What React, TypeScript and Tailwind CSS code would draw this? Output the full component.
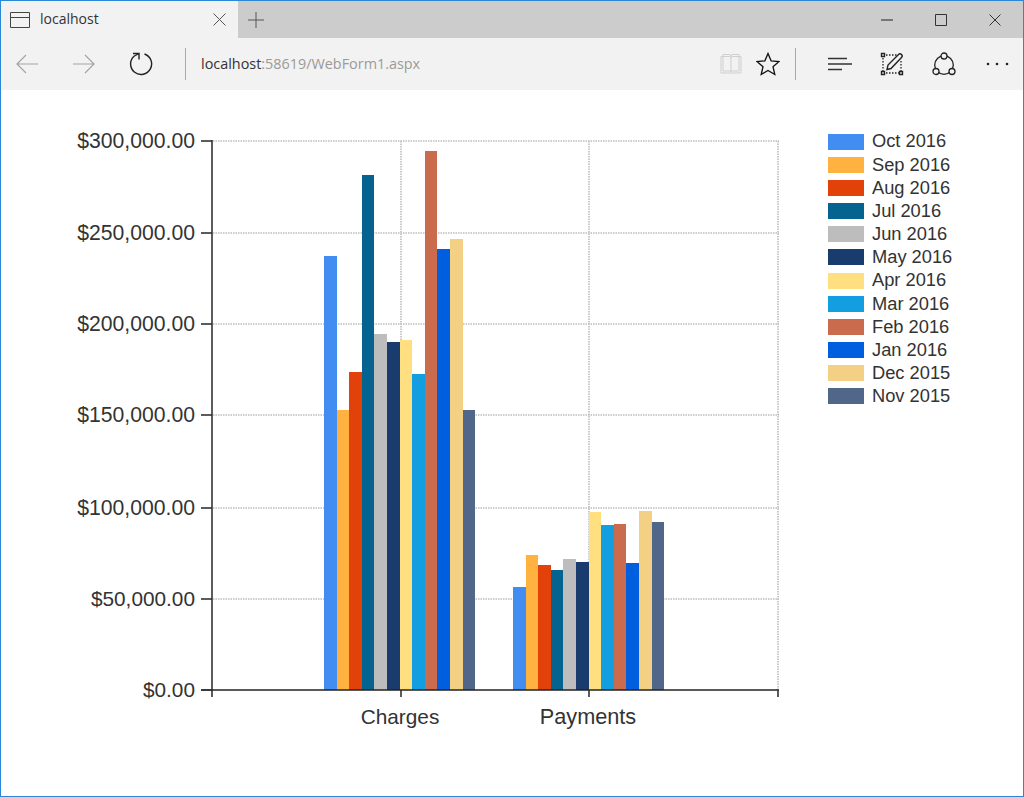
const colors = ['#428DF2', '#FFB23F', '#E2420A', '#05648F', '#BDBDBD', '#1A3B6E', '#FFDF80', '#129EE0', '#C96B4C', '#005FDE', '#F3D083', '#51678A'];
const months = ['Oct 2016', 'Sep 2016', 'Aug 2016', 'Jul 2016', 'Jun 2016', 'May 2016', 'Apr 2016', 'Mar 2016', 'Feb 2016', 'Jan 2016', 'Dec 2015', 'Nov 2015'];
const edgesA = [324, 337, 349, 362, 374, 387, 400, 412, 425, 437, 450, 463, 475];
const edgesB = [513, 526, 538, 551, 563, 576, 589, 601, 614, 626, 639, 652, 664];
const topsA = [256, 410, 372, 175, 334, 342, 340, 374, 151, 249, 239, 410];
const topsB = [587, 555, 565, 570, 559, 562, 512, 525, 524, 563, 511, 522];
const ticks = [
  { y: 141, label: '$300,000.00', size: 21.2 },
  { y: 233, label: '$250,000.00', size: 21.2 },
  { y: 324, label: '$200,000.00', size: 21.2 },
  { y: 415, label: '$150,000.00', size: 21.2 },
  { y: 508, label: '$100,000.00', size: 21.2 },
  { y: 599, label: '$50,000.00', size: 20.8 },
  { y: 690, label: '$0.00', size: 20.8 },
];

function Chart() {
  return (
    <svg width="820" height="706" viewBox="1 90 820 706" className="block shrink-0">
      {ticks.slice(0, 6).map((t) => (
        <line key={t.y} x1="213" x2="779" y1={t.y} y2={t.y} stroke="#bdbdbd" strokeWidth="1.6" strokeDasharray="1.5 1" />
      ))}
      {[401, 589, 778].map((x) => (
        <line key={x} x1={x} x2={x} y1="141" y2="690" stroke="#bdbdbd" strokeWidth="1.6" strokeDasharray="1.5 1" />
      ))}
      {[edgesA, edgesB].map((edges, g) =>
        colors.map((c, i) => {
          const top = (g === 0 ? topsA : topsB)[i];
          return <rect key={g + c} x={edges[i]} y={top} width={edges[i + 1] - edges[i]} height={690 - top} fill={c} />;
        }),
      )}
      <line x1="212" x2="212" y1="140" y2="697" stroke="#333" strokeWidth="1.6" />
      <line x1="201" x2="779" y1="690" y2="690" stroke="#222" strokeWidth="1.6" />
      {ticks.map((t) => (
        <line key={t.y} x1="201" x2="212" y1={t.y} y2={t.y} stroke="#333" strokeWidth="1.6" />
      ))}
      {[401, 589, 778].map((x) => (
        <line key={x} x1={x} x2={x} y1="690" y2="697" stroke="#333" strokeWidth="1.6" />
      ))}
      {ticks.map((t) => (
        <text key={t.label} x="195" y={t.y + 7} textAnchor="end" fontFamily="'Liberation Sans', Arial, sans-serif" fontSize={t.size} fill="#333">
          {t.label}
        </text>
      ))}
      <text x="400" y="724" textAnchor="middle" fontFamily="'Liberation Sans', Arial, sans-serif" fontSize="20.8" fill="#333">Charges</text>
      <text x="588" y="724" textAnchor="middle" fontFamily="'Liberation Sans', Arial, sans-serif" fontSize="21.7" fill="#333">Payments</text>
    </svg>
  );
}

const Icon = ({ children, w = 24, h = 24 }: { children: React.ReactNode; w?: number; h?: number }) => (
  <svg width={w} height={h} viewBox={`0 0 ${w} ${h}`} fill="none" className="block shrink-0">
    {children}
  </svg>
);

export default function App() {
  return (
    <div className="w-[1024px] h-[797px] border border-[#2b87d8] bg-white flex flex-col overflow-hidden font-['Open_Sans',sans-serif]">
      <div className="h-[37px] shrink-0 flex bg-[#cccccc]">
        <div className="w-[237px] bg-[#f2f2f2] flex items-center pl-[9px]">
          <Icon w={20} h={16}>
            <path d="M.5.5h19v15H.5zM.5 5.5h19" stroke="#444" />
          </Icon>
          <span className="ml-[10px] mb-[1px] text-[14px] text-[#333] leading-none">localhost</span>
          <span className="ml-auto mr-[12px]">
            <Icon w={13} h={13}>
              <path d="M.5.5l12 12M12.5.5l-12 12" stroke="#555" />
            </Icon>
          </span>
        </div>
        <span className="ml-[10px] self-center">
          <Icon w={16} h={16}>
            <path d="M8 0v16M0 8h16" stroke="#555" />
          </Icon>
        </span>
        <div className="ml-auto flex items-center">
          <span className="mr-[42px]"><Icon w={12} h={2}><path d="M0 1h12" stroke="#222" /></Icon></span>
          <span className="mr-[42px]"><Icon w={12} h={12}><path d="M.5.5h11v11H.5z" stroke="#333" /></Icon></span>
          <span className="mr-[22px]"><Icon w={12} h={12}><path d="M.5.5l11 11M11.5.5l-11 11" stroke="#333" /></Icon></span>
        </div>
      </div>
      <div className="h-[52px] shrink-0 bg-[#f2f2f2] flex items-center pl-[14px]">
        <Icon><path d="M23 12H2M11 3l-9 9 9 9" stroke="#a3a3a3" strokeWidth="1.2" /></Icon>
        <span className="ml-[33px]"><Icon><path d="M1 12h21M13 3l9 9-9 9" stroke="#a3a3a3" strokeWidth="1.2" /></Icon></span>
        <span className="ml-[33px]">
          <Icon>
            <path d="M15.5 2A10.5 10.5 0 1 1 5 4.2L10 1.5" stroke="#222" strokeWidth="1.4" />
            <path d="M4 1.5h6v6" stroke="#222" strokeWidth="1.4" />
          </Icon>
        </span>
        <div className="ml-[32px] w-px h-[32px] bg-[#a8a8a8]" />
        <div className="ml-[15px] text-[14.4px] leading-none text-[#9a9a9a]"><span className="text-[#333]">localhost</span>:58619/WebForm1.aspx</div>
        <div className="ml-auto flex items-center">
          <Icon>
            <path d="M2 4.5h8.5a1.5 1.5 0 0 1 1.5 1.5 1.5 1.5 0 0 1 1.5-1.5H22V21H2z" stroke="#cfcfcf" />
            <path d="M4 2.5h7l1 2 1-2h7V19H4zM12 5v15" stroke="#cfcfcf" />
          </Icon>
          <span className="ml-[13px]">
            <Icon>
              <path d="M12 1.5l3.1 7.3 7.9.7-6 5.2 1.8 7.8L12 18.4l-6.8 4.1L7 14.7l-6-5.2 7.9-.7z" stroke="#111" strokeWidth="1.3" />
            </Icon>
          </span>
          <div className="ml-[15px] w-px h-[32px] bg-[#a8a8a8]" />
          <span className="ml-[32px]">
            <Icon w={24} h={14}><path d="M0 1.5h19M0 7h24M0 12.5h14" stroke="#333" strokeWidth="1.4" /></Icon>
          </span>
          <span className="ml-[28px]">
            <Icon>
              <path d="M3 3h14M3 3v18M3 21h18M21 9v12" stroke="#222" strokeWidth="1.3" strokeDasharray="1.5 1.5" />
              <path d="M1.5 1.5h3v3h-3zM1.5 19.500h3v3h-3zM19.500 19.500h3v3h-3z" stroke="#222" strokeWidth="1.4" fill="#f2f2f2" />
              <path d="M7 17.500l1-4.500L18.500 2.500a1.800 1.800 0 0 1 3 3L11 16.500z" stroke="#222" strokeWidth="1.4" fill="#f2f2f2" />
            </Icon>
          </span>
          <span className="ml-[28px]">
            <Icon>
              <circle cx="12" cy="13" r="9.3" stroke="#222" strokeWidth="1.3" />
              <circle cx="12" cy="4" r="3" stroke="#222" strokeWidth="1.3" fill="#f2f2f2" />
              <circle cx="4" cy="19.5" r="3" stroke="#222" strokeWidth="1.3" fill="#f2f2f2" />
              <circle cx="20" cy="19.5" r="3" stroke="#222" strokeWidth="1.3" fill="#f2f2f2" />
            </Icon>
          </span>
          <span className="ml-[29px] mr-[14px]">
            <Icon>
              <circle cx="3" cy="12" r="1.3" fill="#222" />
              <circle cx="12" cy="12" r="1.3" fill="#222" />
              <circle cx="22" cy="12" r="1.3" fill="#222" />
            </Icon>
          </span>
        </div>
      </div>
      <div className="flex-1 flex">
        <Chart />
        <div className="ml-[7px] pt-[40px] flex flex-col">
          {months.map((m, i) => (
            <div key={m} className="h-[23.18px] flex items-center">
              <div className="w-[36px] h-[16px]" style={{ backgroundColor: colors[i] }} />
              <span className="ml-[8px] text-[18.3px] leading-none text-[#333] font-['Liberation_Sans',Arial,sans-serif]">{m}</span>
            </div>
          ))}
        </div>
      </div>
    </div>
  );
}
